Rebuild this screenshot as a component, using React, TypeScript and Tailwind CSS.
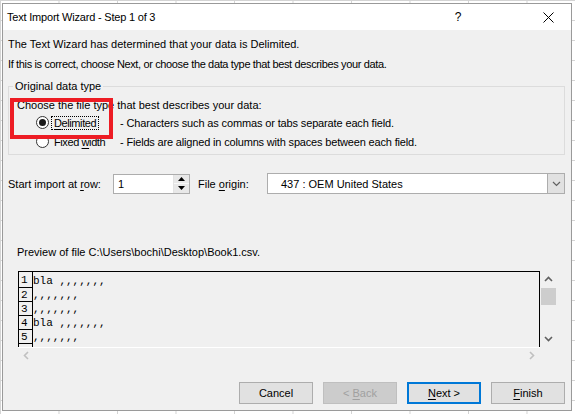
import React from "react";

const ui: React.CSSProperties = {
  fontFamily: '"Liberation Sans", Arial, sans-serif',
};
const mono: React.CSSProperties = {
  fontFamily: '"Liberation Mono", "Courier New", monospace',
};

function U({ children }: { children: React.ReactNode }) {
  return <span className="underline decoration-1 underline-offset-[2px]">{children}</span>;
}

function Radio({ checked }: { checked: boolean }) {
  return (
    <span className="w-[13px] h-[13px] rounded-full border border-[#333333] bg-white flex items-center justify-center shrink-0">
      {checked && <span className="w-[7px] h-[7px] rounded-full bg-[#1a1a1a]" />}
    </span>
  );
}

function Chevron({ dir, color }: { dir: "up" | "down" | "left" | "right"; color: string }) {
  const d =
    dir === "up"
      ? "M1 6 L4.5 2.5 L8 6"
      : dir === "down"
      ? "M1 3 L4.5 6.5 L8 3"
      : dir === "left"
      ? "M6 1 L2.5 4.5 L6 8"
      : "M3 1 L6.5 4.5 L3 8";
  return (
    <svg width="9" height="9" viewBox="0 0 9 9">
      <path d={d} fill="none" stroke={color} strokeWidth="1.6" />
    </svg>
  );
}

const rows = ["bla ,,,,,,,", ",,,,,,,", ",,,,,,,", "bla ,,,,,,,", ",,,,,,,"];

export default function App() {
  return (
    <div
      className="relative w-[575px] h-[414px] overflow-hidden bg-white bg-[linear-gradient(90deg,#d4d4d4_1px,transparent_1px),linear-gradient(180deg,#d4d4d4_1px,transparent_1px)] bg-[size:58.5px_20px] pl-[2px] pt-[3px]"
      style={ui}
    >
      <div className="w-[570px] h-[408px] border border-[#9a9a9a] bg-[#f0f0f0] flex flex-col text-[11px] leading-[14px] text-black">
        {/* Title bar */}
        <div className="h-[26px] shrink-0 bg-white flex items-center pl-[4px]">
          <span className="flex-1 text-[11px] tracking-[-0.2px]">Text Import Wizard - Step 1 of 3</span>
          <span className="w-[46px] text-center text-[12px]">?</span>
          <span className="w-[44px]" />
          <span className="w-[46px] flex justify-center">
            <svg width="11" height="11" viewBox="0 0 11 11">
              <path d="M0.5 0.5 L10.5 10.5 M10.5 0.5 L0.5 10.5" stroke="#000" strokeWidth="1" />
            </svg>
          </span>
        </div>

        {/* Body */}
        <div className="flex flex-col pl-[5px] pr-[6px] pt-[7px]">
          <div className="h-[14px]">The Text Wizard has determined that your data is Delimited.</div>
          <div className="h-[14px] mt-[6px] tracking-[-0.36px]">
            If this is correct, choose Next, or choose the data type that best describes your data.
          </div>

          <fieldset className="mt-[8px] border border-[#dcdcdc] pb-[3px]">
            <legend className="ml-[4px] px-[2px] h-[14px]">Original data type</legend>
            <div className="h-[14px] mt-[5px] ml-[8px]">Choose the file type that best describes your data:</div>
            <div className="h-[19px] mt-[1px] flex items-center">
              <div className="ml-[27px] w-[84px] flex items-center">
                <Radio checked />
                <span className="ml-[2px] px-[2px] h-[14px] border border-dotted border-black flex items-center tracking-[-0.4px]">
                  <span>
                    <U>D</U>elimited
                  </span>
                </span>
              </div>
              <span className="tracking-[-0.14px]">- Characters such as commas or tabs separate each field.</span>
            </div>
            <div className="h-[19px] flex items-center">
              <div className="ml-[27px] w-[84px] flex items-center">
                <Radio checked={false} />
                <span className="ml-[2px] px-[3px] h-[14px] flex items-center tracking-[-0.4px]">
                  <span>
                    Fixed <U>w</U>idth
                  </span>
                </span>
              </div>
              <span className="tracking-[-0.17px]">- Fields are aligned in columns with spaces between each field.</span>
            </div>
          </fieldset>

          {/* Start row / file origin */}
          <div className="mt-[18px] h-[21px] flex items-center">
            <span className="w-[105px]">
              Start import at <U>r</U>ow:
            </span>
            <div className="w-[77px] h-[20px] border border-[#adadad] bg-white flex">
              <span className="flex-1 pl-[4px] flex items-center">1</span>
              <div className="w-[16px] flex flex-col border-l border-[#e3e3e3]">
                <div className="flex-1 bg-[#e8e8e8] border-b border-[#f8f8f8] flex items-center justify-center">
                  <svg width="7" height="4" viewBox="0 0 7 4">
                    <path d="M0 4 L3.5 0 L7 4 Z" fill="#000" />
                  </svg>
                </div>
                <div className="flex-1 bg-[#e8e8e8] flex items-center justify-center">
                  <svg width="7" height="4" viewBox="0 0 7 4">
                    <path d="M0 0 L3.5 4 L7 0 Z" fill="#000" />
                  </svg>
                </div>
              </div>
            </div>
            <span className="ml-[8px] w-[69px]">
              File <U>o</U>rigin:
            </span>
            <div className="w-[298px] h-[21px] border border-[#adadad] bg-white flex">
              <span className="flex-1 pl-[13px] flex items-center">437 : OEM United States</span>
              <div className="w-[17px] bg-[#e1e1e1] border-l border-[#adadad] flex items-center justify-center">
                <svg width="9" height="6" viewBox="0 0 9 6">
                  <path d="M1 1 L4.5 4.5 L8 1" fill="none" stroke="#606060" strokeWidth="1.2" />
                </svg>
              </div>
            </div>
          </div>

          {/* Preview */}
          <div className="mt-[51px] ml-[9px] h-[14px]">
            Preview of file C:\Users\bochi\Desktop\Book1.csv.
          </div>
          <div className="mt-[12px] ml-[10px] w-[539px] flex flex-col">
            <div className="flex h-[76px]">
              <div
                className="w-[522px] h-[76px] border-t border-l border-r border-black overflow-hidden flex flex-col text-[11px] leading-[14px]"
                style={mono}
              >
                {rows.map((r, i) => (
                  <div key={i} className={`flex shrink-0 ${i === 0 ? "h-[16px]" : "h-[14px]"}`}>
                    <div
                      className={`w-[14px] border-r border-b border-black pl-[2px] flex ${
                        i === 0 ? "items-end" : "items-center"
                      }`}
                    >
                      {i + 1}
                    </div>
                    <div className={`flex ${i === 0 ? "items-end" : "items-center"}`}>{r}</div>
                  </div>
                ))}
                <div className="flex-1 w-[14px] border-r border-black" />
              </div>
              <div className="w-[17px] h-[76px] flex flex-col">
                <div className="h-[17px] flex items-center justify-center">
                  <Chevron dir="up" color="#606060" />
                </div>
                <div className="h-[17px] ml-[1px] w-[15px] bg-[#cdcdcd]" />
                <div className="flex-1" />
                <div className="h-[17px] flex items-center justify-center">
                  <Chevron dir="down" color="#606060" />
                </div>
              </div>
            </div>
            <div className="flex h-[15px]">
              <div className="w-[522px] border-t border-white flex items-center justify-between">
                <span className="w-[17px] flex justify-center">
                  <Chevron dir="left" color="#c0c0c0" />
                </span>
                <span className="w-[17px] flex justify-center">
                  <Chevron dir="right" color="#c0c0c0" />
                </span>
              </div>
              <div className="w-[17px]" />
            </div>
          </div>

          {/* Buttons */}
          <div className="mt-[20px] flex justify-end gap-[10px]">
            <div className="w-[74px] h-[22px] bg-[#e1e1e1] border border-[#adadad] flex items-center justify-center">
              <span>Cancel</span>
            </div>
            <div className="w-[74px] h-[22px] bg-[#cccccc] border border-[#bfbfbf] flex items-center justify-center text-[#a0a0a0]">
              <span>
                &lt; <U>B</U>ack
              </span>
            </div>
            <div className="w-[74px] h-[22px] bg-[#e1e1e1] border-2 border-[#0078d7] flex items-center justify-center">
              <span>
                <U>N</U>ext &gt;
              </span>
            </div>
            <div className="w-[74px] h-[22px] bg-[#e1e1e1] border border-[#adadad] flex items-center justify-center">
              <span>
                <U>F</U>inish
              </span>
            </div>
          </div>
        </div>
      </div>

      {/* Red highlight annotation */}
      <div className="absolute left-[10px] top-[98px] w-[103px] h-[41px] border-4 border-[#ed1c24]" />
    </div>
  );
}
